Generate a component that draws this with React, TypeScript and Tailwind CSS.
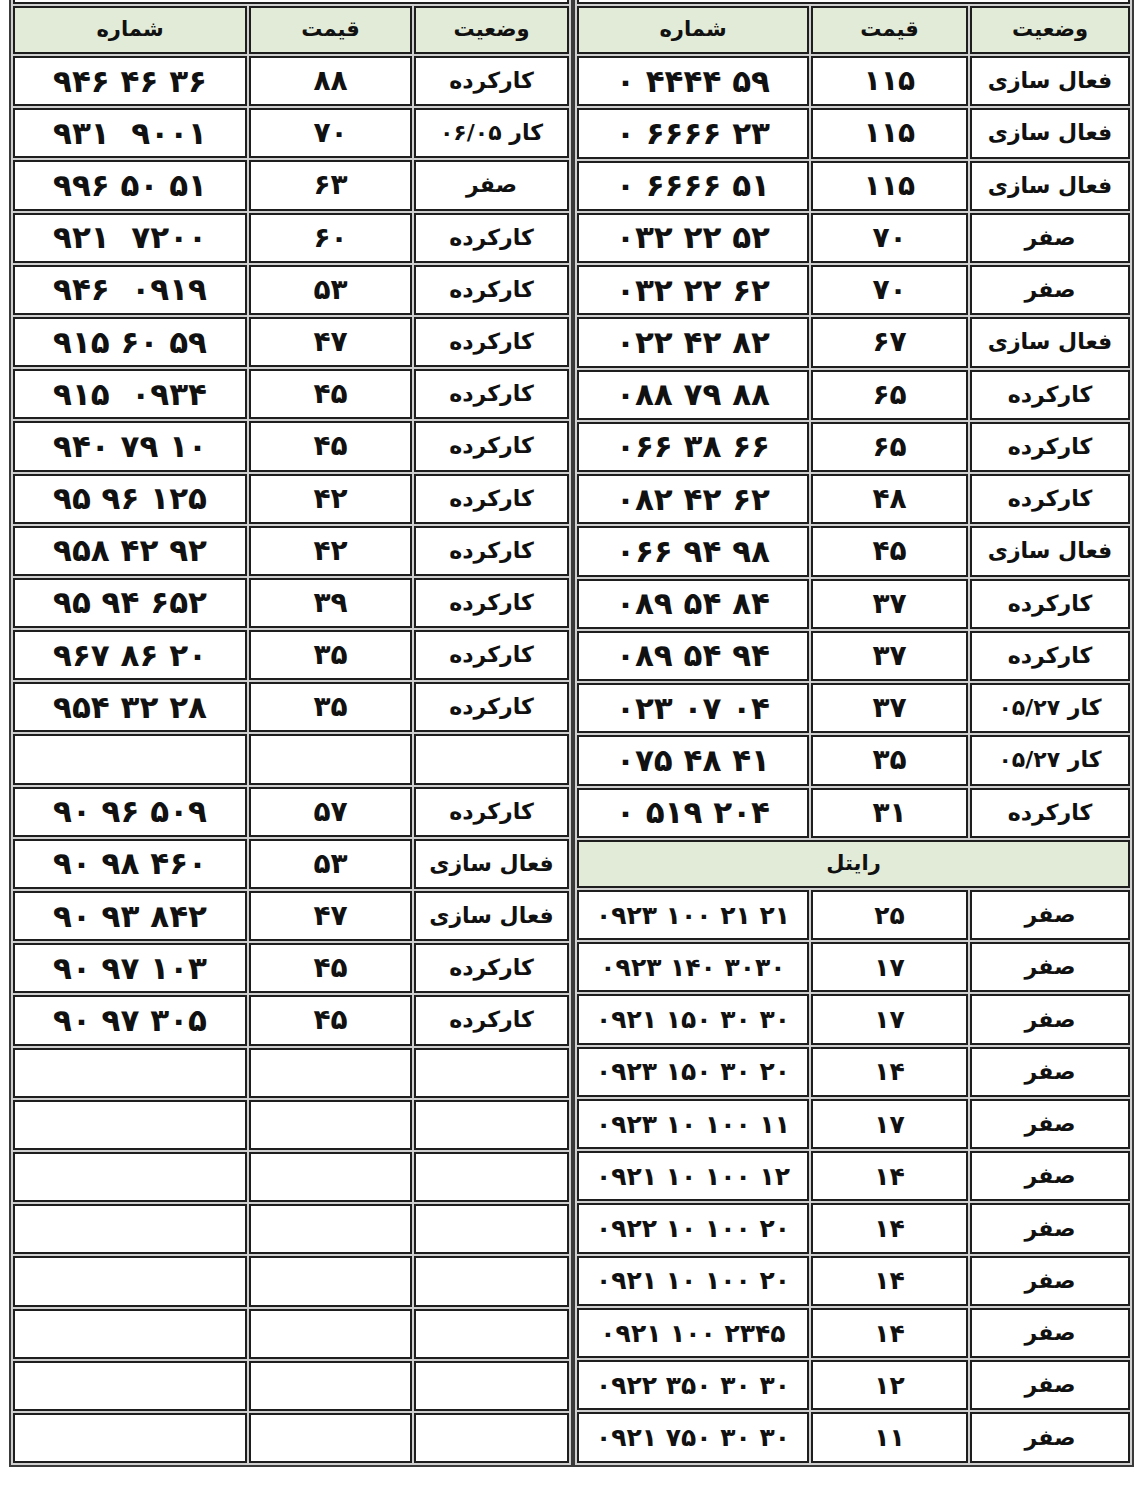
import React from "react"

type Row = { num: string; price: string; status: string } | null

const leftRows: Row[] = [
  { num: "۹۴۶ ۴۶ ۳۶", price: "۸۸", status: "کارکرده" },
  { num: "۹۳۱  ۹۰۰۱", price: "۷۰", status: "کار ۰۶/۰۵" },
  { num: "۹۹۶ ۵۰ ۵۱", price: "۶۳", status: "صفر" },
  { num: "۹۲۱  ۷۲۰۰", price: "۶۰", status: "کارکرده" },
  { num: "۹۴۶  ۰۹۱۹", price: "۵۳", status: "کارکرده" },
  { num: "۹۱۵ ۶۰ ۵۹", price: "۴۷", status: "کارکرده" },
  { num: "۹۱۵  ۰۹۳۴", price: "۴۵", status: "کارکرده" },
  { num: "۹۴۰ ۷۹ ۱۰", price: "۴۵", status: "کارکرده" },
  { num: "۹۵ ۹۶ ۱۲۵", price: "۴۲", status: "کارکرده" },
  { num: "۹۵۸ ۴۲ ۹۲", price: "۴۲", status: "کارکرده" },
  { num: "۹۵ ۹۴ ۶۵۲", price: "۳۹", status: "کارکرده" },
  { num: "۹۶۷ ۸۶ ۲۰", price: "۳۵", status: "کارکرده" },
  { num: "۹۵۴ ۳۲ ۲۸", price: "۳۵", status: "کارکرده" },
  null,
  { num: "۹۰ ۹۶ ۵۰۹", price: "۵۷", status: "کارکرده" },
  { num: "۹۰ ۹۸ ۴۶۰", price: "۵۳", status: "فعال سازی" },
  { num: "۹۰ ۹۳ ۸۴۲", price: "۴۷", status: "فعال سازی" },
  { num: "۹۰ ۹۷ ۱۰۳", price: "۴۵", status: "کارکرده" },
  { num: "۹۰ ۹۷ ۳۰۵", price: "۴۵", status: "کارکرده" },
  null,
  null,
  null,
  null,
  null,
  null,
  null,
  null,
]

const rightTop: Row[] = [
  { num: "۰ ۴۴۴۴ ۵۹", price: "۱۱۵", status: "فعال سازی" },
  { num: "۰ ۶۶۶۶ ۲۳", price: "۱۱۵", status: "فعال سازی" },
  { num: "۰ ۶۶۶۶ ۵۱", price: "۱۱۵", status: "فعال سازی" },
  { num: "۰۳۲ ۲۲ ۵۲", price: "۷۰", status: "صفر" },
  { num: "۰۳۲ ۲۲ ۶۲", price: "۷۰", status: "صفر" },
  { num: "۰۲۲ ۴۲ ۸۲", price: "۶۷", status: "فعال سازی" },
  { num: "۰۸۸ ۷۹ ۸۸", price: "۶۵", status: "کارکرده" },
  { num: "۰۶۶ ۳۸ ۶۶", price: "۶۵", status: "کارکرده" },
  { num: "۰۸۲ ۴۲ ۶۲", price: "۴۸", status: "کارکرده" },
  { num: "۰۶۶ ۹۴ ۹۸", price: "۴۵", status: "فعال سازی" },
  { num: "۰۸۹ ۵۴ ۸۴", price: "۳۷", status: "کارکرده" },
  { num: "۰۸۹ ۵۴ ۹۴", price: "۳۷", status: "کارکرده" },
  { num: "۰۲۳ ۰۷ ۰۴", price: "۳۷", status: "کار ۰۵/۲۷" },
  { num: "۰۷۵ ۴۸ ۴۱", price: "۳۵", status: "کار ۰۵/۲۷" },
  { num: "۰ ۵۱۹ ۲۰۴", price: "۳۱", status: "کارکرده" },
]

const rightel: Row[] = [
  { num: "۰۹۲۳ ۱۰۰ ۲۱ ۲۱", price: "۲۵", status: "صفر" },
  { num: "۰۹۲۳ ۱۴۰ ۳۰۳۰", price: "۱۷", status: "صفر" },
  { num: "۰۹۲۱ ۱۵۰ ۳۰ ۳۰", price: "۱۷", status: "صفر" },
  { num: "۰۹۲۳ ۱۵۰ ۳۰ ۲۰", price: "۱۴", status: "صفر" },
  { num: "۰۹۲۳ ۱۰ ۱۰۰ ۱۱", price: "۱۷", status: "صفر" },
  { num: "۰۹۲۱ ۱۰ ۱۰۰ ۱۲", price: "۱۴", status: "صفر" },
  { num: "۰۹۲۲ ۱۰ ۱۰۰ ۲۰", price: "۱۴", status: "صفر" },
  { num: "۰۹۲۱ ۱۰ ۱۰۰ ۲۰", price: "۱۴", status: "صفر" },
  { num: "۰۹۲۱ ۱۰۰ ۲۳۴۵", price: "۱۴", status: "صفر" },
  { num: "۰۹۲۲ ۳۵۰ ۳۰ ۳۰", price: "۱۲", status: "صفر" },
  { num: "۰۹۲۱ ۷۵۰ ۳۰ ۳۰", price: "۱۱", status: "صفر" },
]

const cell = "border-2 border-[#1e1e1e] h-[50.2px] p-0 text-center align-middle leading-none"
const head = "border-2 border-[#1e1e1e] h-[48px] p-0 text-center align-middle bg-[#e2ebd8] text-[21px] font-bold"

function DataRow({ row, small }: { row: Row; small?: boolean }) {
  return (
    <tr>
      <td className={`${cell} ${small ? "text-[25px]" : "text-[31px]"} font-bold whitespace-pre`} dir="ltr">
        {row?.num}
      </td>
      <td className={`${cell} ${small ? "text-[25px]" : "text-[28px]"} font-bold`} dir="ltr">
        {row?.price}
      </td>
      <td className={`${cell} text-[22px] font-bold`} dir="rtl">
        {row?.status}
      </td>
    </tr>
  )
}

function Header() {
  return (
    <tr>
      <td className={head}>شماره</td>
      <td className={head}>قیمت</td>
      <td className={head}>وضعیت</td>
    </tr>
  )
}

function SheetTable({ widths, children }: { widths: number[]; children: React.ReactNode }) {
  return (
    <table className="border-separate border-spacing-[2px] border-2 border-[#3a3a3a] bg-[#cfcfcf] table-fixed">
      <colgroup>
        <col style={{ width: widths[0] }} />
        <col style={{ width: widths[1] }} />
        <col style={{ width: widths[2] }} />
      </colgroup>
      <tbody className="bg-white">
        <tr>
          <td colSpan={3} className="border-2 border-[#1e1e1e] h-[40px] bg-white" />
        </tr>
        <Header />
        {children}
      </tbody>
    </table>
  )
}

export default function App() {
  return (
    <div
      className="w-[1141px] h-[1500px] overflow-hidden bg-white text-[#111]"
      style={{ fontFamily: '"DejaVu Sans", sans-serif' }}
    >
      <div className="flex gap-0 pl-[9px] -mt-[40px]">
        <SheetTable widths={[234, 163, 155]}>
          {leftRows.map((r, i) => (
            <DataRow key={i} row={r} />
          ))}
        </SheetTable>
        <SheetTable widths={[232, 157, 160]}>
          {rightTop.map((r, i) => (
            <DataRow key={i} row={r} />
          ))}
          <tr>
            <td colSpan={3} className={head}>
              رایتل
            </td>
          </tr>
          {rightel.map((r, i) => (
            <DataRow key={i} row={r} small />
          ))}
        </SheetTable>
      </div>
    </div>
  )
}
